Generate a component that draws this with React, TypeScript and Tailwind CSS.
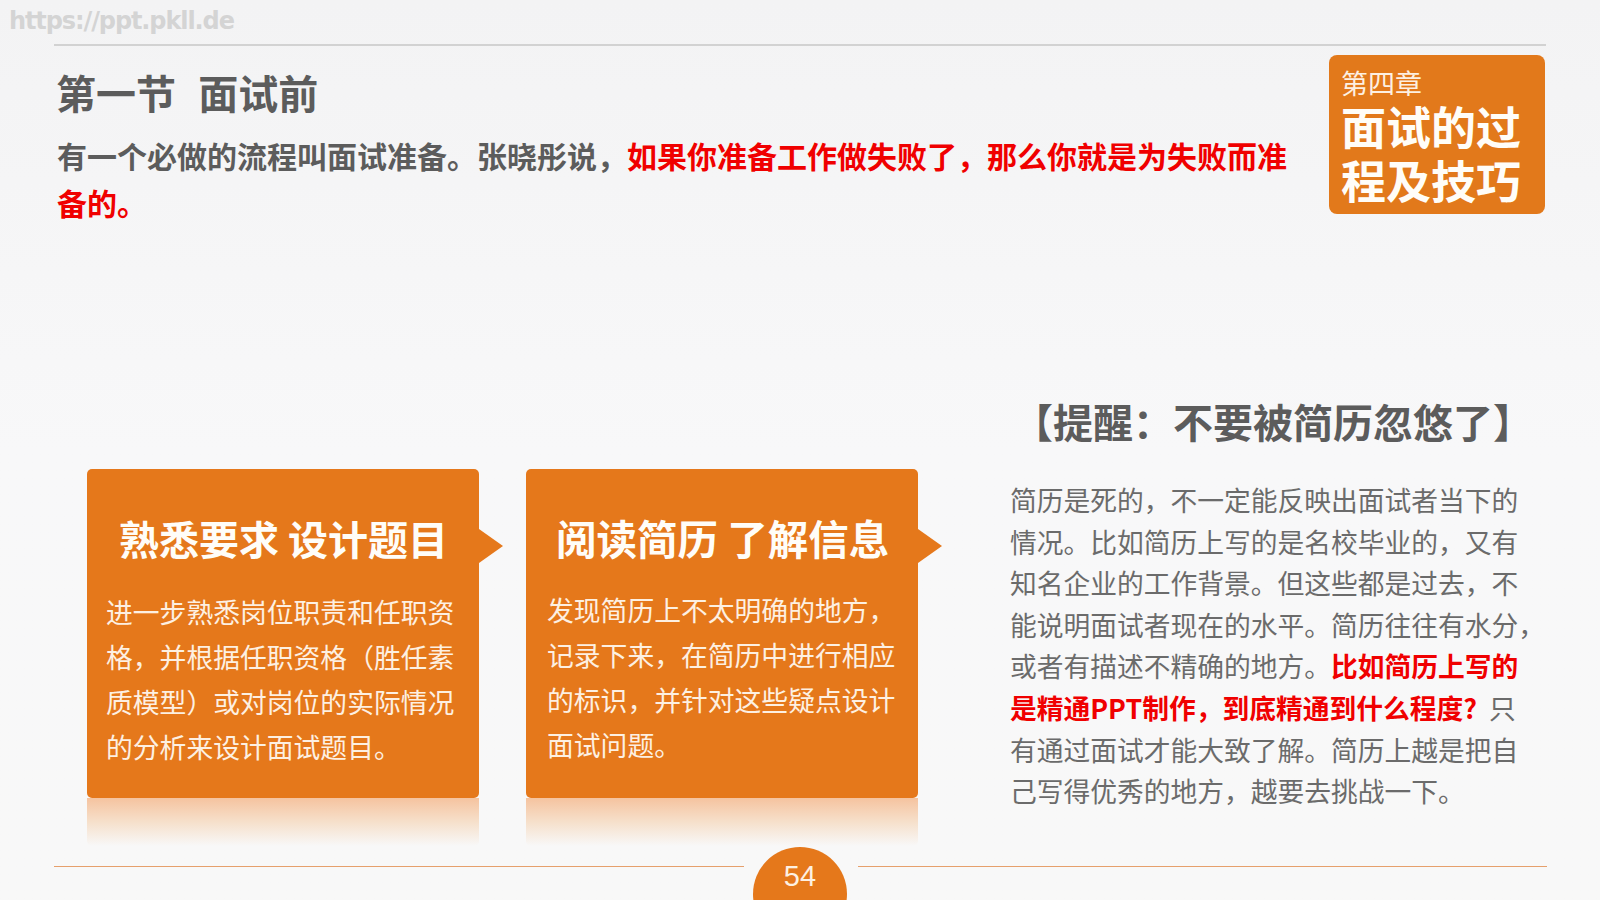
const cjk = "font-['Noto_Sans_CJK_SC','Noto_Sans_CJK_SC',sans-serif]";

function Card({ title, lines, titleCls, bodyPl, bodyPt }: { title: string; lines: string[]; titleCls: string; bodyPl: string; bodyPt: string }) {
  return (
    <div className="w-[392px] flex flex-col">
      <div className="relative h-[330px] bg-[#e5781b] rounded-[5px] text-white">
        <div className={`pt-[44px] ${titleCls} leading-[50px] font-bold whitespace-pre text-[#fffdf8]`}>{title}</div>
        <div className={`${bodyPt} ${bodyPl} text-[26.8px] leading-[45px] font-normal whitespace-nowrap text-[#fdf0e2]`}>
          {lines.map((l) => (
            <div key={l}>{l}</div>
          ))}
        </div>
        <div className="absolute left-full top-[60px] w-0 h-0 border-y-[17px] border-y-transparent border-l-[24px] border-l-[#e5781b]" />
      </div>
      <div className="h-[48px] bg-gradient-to-b from-[#f5c39f] via-[#f6e0cb] to-transparent rounded-b-[5px]" />
    </div>
  );
}

export default function App() {
  return (
    <div className={`w-[1600px] h-[900px] overflow-hidden flex flex-col bg-gradient-to-b from-[#f3f3f4] via-[#f8f8f9] to-[#f8f8f8] ${cjk}`}>
      <div className="h-[44px] pl-[9px] pt-[4px] text-[24px] leading-[34px] font-bold text-[#d4d4d4] font-['DejaVu_Sans',sans-serif] tracking-[-1.1px]">https://ppt.pkll.de</div>
      <div className="ml-[54px] w-[1492px] h-[2px] bg-[#d2d2d2]" />

      <div className="flex ml-[57px] h-[170px]">
        <div className="w-[1272px]">
          <div className="pt-[17px] -ml-[1px] text-[40px] leading-[58px] font-bold text-[#5c5c5c] whitespace-pre [word-spacing:2px]">第一节  面试前</div>
          <div className="mt-[11px] w-[1240px] text-[30px] leading-[47px] font-bold text-[#5c5c5c]">
            有一个必做的流程叫面试准备。张晓彤说，<span className="text-[#f00000]">如果你准备工作做失败了，那么你就是为失败而准备的。</span>
          </div>
        </div>
        <div className="mt-[9px] w-[216px] h-[159px] bg-[#e2791b] rounded-[8px] pl-[12px] pt-[12px] text-[#fffdf8]">
          <div className="text-[27px] leading-[32px] text-[#fdf0e2]">第四章</div>
          <div className="text-[45px] leading-[54px] font-bold">
            <div>面试的过</div>
            <div>程及技巧</div>
          </div>
        </div>
      </div>

      <div className="flex h-[630px]">
        <div className="ml-[87px] pt-[253px] flex gap-[47px] w-[923px]">
          <Card
            title="熟悉要求 设计题目"
            titleCls="pl-[32px] text-[40px]"
            bodyPl="pl-[19px]"
            bodyPt="pt-[26px]"
            lines={["进一步熟悉岗位职责和任职资", "格，并根据任职资格（胜任素", "质模型）或对岗位的实际情况", "的分析来设计面试题目。"]}
          />
          <Card
            title="阅读简历 了解信息"
            titleCls="pl-[30px] text-[40.5px]"
            bodyPl="pl-[21px]"
            bodyPt="pt-[24px]"
            lines={["发现简历上不太明确的地方，", "记录下来，在简历中进行相应", "的标识，并针对这些疑点设计", "面试问题。"]}
          />
        </div>
        <div className="w-[590px]">
          <div className="pt-[179px] ml-[3px] text-[40px] leading-[52px] font-bold text-[#5c5c5c] whitespace-nowrap">【提醒：不要被简历忽悠了】</div>
          <div className="mt-[32px] text-[26.75px] leading-[41.6px] text-[#6b6b6b] whitespace-nowrap">
            <div>简历是死的，不一定能反映出面试者当下的</div>
            <div>情况。比如简历上写的是名校毕业的，又有</div>
            <div>知名企业的工作背景。但这些都是过去，不</div>
            <div>能说明面试者现在的水平。简历往往有水分，</div>
            <div>或者有描述不精确的地方。<span className="font-bold text-[#f00000]">比如简历上写的</span></div>
            <div><span className="font-bold text-[#f00000]">是精通PPT制作，到底精通到什么程度?</span><span className="ml-[12px]">只</span></div>
            <div>有通过面试才能大致了解。简历上越是把自</div>
            <div>己写得优秀的地方，越要去挑战一下。</div>
          </div>
        </div>
      </div>

      <div className="flex h-[54px] items-start">
        <div className="ml-[54px] mt-[20px] w-[690px] h-[1px] bg-[#e6a06c]" />
        <div className="ml-[9px] mt-[1px] w-[94px] h-[94px] shrink-0 rounded-full bg-[#e5781b] text-center text-[29px] leading-[58px] text-[#fdf0e2] font-['Liberation_Sans',sans-serif]">54</div>
        <div className="ml-[11px] mt-[20px] w-[689px] h-[1px] bg-[#e6a06c]" />
      </div>
    </div>
  );
}
